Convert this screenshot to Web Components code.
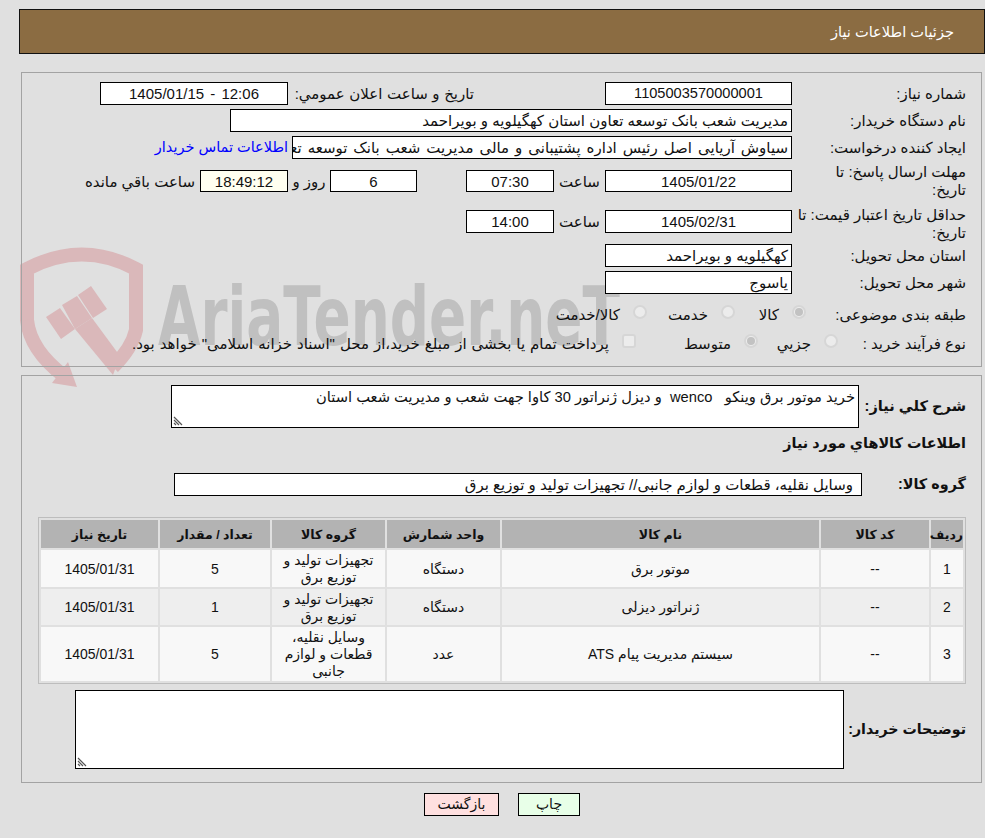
<!DOCTYPE html>
<html lang="fa" dir="rtl"><head><meta charset="utf-8"><title>جزئیات اطلاعات نیاز</title>
<style>
html{background:#e0e0e0}
html,body{margin:0;padding:0}
body{width:985px;height:838px;overflow:hidden;position:relative;font:15px "Liberation Sans","DejaVu Sans",sans-serif;color:#111;direction:rtl}
</style></head><body>
<water-mark></water-mark>
<page-header>جزئیات اطلاعات نیاز</page-header>

<info-panel style="--top:18px;--h:295px;--pt:9px">
  <form-row style="--h:23px">
    <field-label style="--w:174px">شماره نیاز:</field-label>
    <field-box style="--w:187px;--fs:14.6px">1105003570000001</field-box>
    <field-label style="--w:317px;--pr:131px;--lws:.4px">تاریخ و ساعت اعلان عمومي:</field-label>
    <field-box style="--w:188px;--ws:2px">12:06 - 1405/01/15</field-box>
  </form-row>
  <form-row style="--h:23px;--mt:4px">
    <field-label style="--w:174px">نام دستگاه خریدار:</field-label>
    <field-box style="--w:562px;--al:right">مدیریت شعب بانک توسعه تعاون استان کهگیلویه و بویراحمد</field-box>
  </form-row>
  <form-row style="--h:23px;--mt:4px">
    <field-label style="--w:174px">ایجاد کننده درخواست:</field-label>
    <field-box style="--w:500px;--al:right;--ws:1.8px">سیاوش آریایی اصل رئیس اداره پشتیبانی و مالی مدیریت شعب بانک توسعه تعاون</field-box>
    <field-label style="--w:140px;--pr:4px;--c:#00f;--lfs:14.5px">اطلاعات تماس خریدار</field-label>
  </form-row>
  <form-row style="--h:22px;--mt:11px">
    <field-label style="--w:174px;--lh:18px">مهلت ارسال پاسخ: تا<br>تاریخ:</field-label>
    <field-box style="--w:187px">1405/01/22</field-box>
    <field-label style="--w:51px;--ta:center">ساعت</field-label>
    <field-box style="--w:88px">07:30</field-box>
    <spacer-gap style="--w:49px"></spacer-gap>
    <field-box style="--w:87px">6</field-box>
    <field-label style="--w:42px;--ta:center">روز و</field-label>
    <field-box style="--w:88px;--bg:#fffff0">18:49:12</field-box>
    <field-label style="--w:120px;--pr:5px">ساعت باقي مانده</field-label>
  </form-row>
  <form-row style="--h:23px;--mt:18px">
    <field-label style="--w:174px;--lh:18px;--lift:5px">حداقل تاریخ اعتبار قیمت: تا<br>تاریخ:</field-label>
    <field-box style="--w:187px">1405/02/31</field-box>
    <field-label style="--w:51px;--ta:center">ساعت</field-label>
    <field-box style="--w:88px">14:00</field-box>
  </form-row>
  <form-row style="--h:23px;--mt:11px">
    <field-label style="--w:174px">استان محل تحویل:</field-label>
    <field-box style="--w:187px;--al:right">کهگیلویه و بویراحمد</field-box>
  </form-row>
  <form-row style="--h:23px;--mt:4px">
    <field-label style="--w:174px">شهر محل تحویل:</field-label>
    <field-box style="--w:187px;--al:right">یاسوج</field-box>
  </form-row>
  <form-row style="--h:28px;--mt:6px">
    <field-label style="--w:160px">طبقه بندی موضوعی:</field-label>
    <choice-item style="--w:71px" checked>کالا</choice-item>
    <choice-item style="--w:88px">خدمت</choice-item>
    <choice-item style="--w:90px">کالا/خدمت</choice-item>
  </form-row>
  <form-row style="--h:28px;--mt:1px">
    <field-label style="--w:128px">نوع فرآیند خرید :</field-label>
    <choice-item style="--w:80px">جزيي</choice-item>
    <choice-item style="--w:122px" checked>متوسط</choice-item>
    <choice-item style="--w:500px;--iws:.8px" square>پرداخت تمام یا بخشی از مبلغ خرید،از محل "اسناد خزانه اسلامی" خواهد بود.</choice-item>
  </form-row>
</info-panel>

<info-panel style="--top:8px;--h:408px;--pt:9px">
  <form-row style="--h:43px">
    <field-label style="--w:107px;--fw:bold;--lfs:14.6px">شرح کلي نياز:</field-label>
    <note-box style="--w:688px;--h:43px;--fs:14.7px">خرید موتور برق وینکو   wenco  و دیزل ژنراتور 30 کاوا جهت شعب و مدیریت شعب استان</note-box>
  </form-row>
  <form-row style="--h:24px;--mt:3px">
    <field-label style="--w:400px;--fw:bold;--lfs:14.4px">اطلاعات کالاهاي مورد نياز</field-label>
  </form-row>
  <form-row style="--h:23px;--mt:18px">
    <field-label style="--w:104px;--fw:bold;--lfs:14.4px">گروه کالا:</field-label>
    <field-box style="--w:688px;--al:right;--pad:8px">وسایل نقلیه، قطعات و لوازم جانبی// تجهیزات تولید و توزیع برق</field-box>
  </form-row>
  <goods-table></goods-table>
  <form-row style="--h:79px;--mt:6px">
    <field-label style="--w:122px;--fw:bold;--lfs:14.2px">توضیحات خریدار:</field-label>
    <note-box style="--w:769px;--h:79px"></note-box>
  </form-row>
</info-panel>

<button-bar>
  <action-btn style="--w:62px;--bg:#e8ffe8">چاپ</action-btn>
  <action-btn style="--w:75px;--bg:#ffe0e0">بازگشت</action-btn>
</button-bar>

<script>
function define(name, html){
  customElements.define(name, class extends HTMLElement{
    constructor(){super();this.attachShadow({mode:'open'}).innerHTML=html;}
  });
}
define('page-header',`<style>:host{display:block;box-sizing:border-box;margin:9px 0 0 0;width:966px;height:45px;background:#8b6c42;border:1px solid #111;color:#fff;padding:0 30px;line-height:44px;font-size:14.6px}</style><slot></slot>`);
define('info-panel',`<style>:host{display:block;box-sizing:border-box;width:961px;height:var(--h);margin-top:var(--top);margin-right:3px;padding-top:var(--pt);padding-right:15px;border:1px solid #a3a3a3}
.c{display:flex;flex-direction:column}</style><div class="c"><slot></slot></div>`);
define('form-row',`<style>:host{display:flex;align-items:center;height:var(--h);margin-top:var(--mt,0)}</style><slot></slot>`);
define('field-label',`<style>:host{display:block;box-sizing:border-box;flex:none;width:var(--w);padding-right:var(--pr,0);padding-top:var(--lift,0);text-align:var(--ta,right);color:var(--c,#111);font-weight:var(--fw,normal);font-size:var(--lfs,inherit);line-height:var(--lh,17px);white-space:nowrap;word-spacing:var(--lws,0)}</style><slot></slot>`);
define('field-box',`<style>:host{display:block;box-sizing:border-box;flex:none;width:var(--w);height:100%;background:var(--bg,#fff);border:1px solid #000;padding:0 var(--pad,3px);text-align:var(--al,center);white-space:nowrap;overflow:hidden;line-height:21px;font-size:var(--fs,inherit);word-spacing:var(--ws,0)}</style><slot></slot>`);
define('spacer-gap',`<style>:host{display:block;flex:none;width:var(--w)}</style>`);
define('note-box',`<style>:host{display:block;box-sizing:border-box;position:relative;flex:none;width:var(--w);height:var(--h);background:#fff;border:1px solid #000;padding:3px;white-space:pre-wrap;line-height:17px;font-size:var(--fs,inherit)}
svg{position:absolute;left:1px;bottom:1px}</style><slot></slot><svg width="10" height="10" viewBox="0 0 10 10"><path d="M1 1l8 8M1 4l5 5M1 7l2 2" stroke="#555" stroke-width="1.2" fill="none"/></svg>`);
customElements.define('choice-item',class extends HTMLElement{
  constructor(){super();
    const sq=this.hasAttribute('square'),ck=this.hasAttribute('checked');
    this.attachShadow({mode:'open'}).innerHTML=`<style>:host{display:flex;align-items:center;flex:none;width:var(--w);white-space:nowrap;gap:13px;word-spacing:var(--iws,0)}
    .m{flex:none;box-sizing:border-box;width:14px;height:14px;margin-top:-5px;border:2px solid #d6d6d6;background:#ececec;border-radius:${sq?'3px':'50%'};position:relative}
    .d{position:absolute;inset:1px;border-radius:50%;background:#c2c2c2}
    span{display:block;margin-top:1px}</style><div class="m">${ck?'<div class="d"></div>':''}</div><span><slot></slot></span>`;
  }
});
customElements.define('goods-table',class extends HTMLElement{
  constructor(){super();
    const head=['ردیف','کد کالا','نام کالا','واحد شمارش','گروه کالا','تعداد / مقدار','تاریخ نیاز'];
    const rows=[['1','--','موتور برق','دستگاه','تجهیزات تولید و توزیع برق','5','1405/01/31'],
      ['2','--','ژنراتور دیزلی','دستگاه','تجهیزات تولید و توزیع برق','1','1405/01/31'],
      ['3','--','سیستم مدیریت پیام ATS','عدد','وسایل نقلیه، قطعات و لوازم جانبی','5','1405/01/31']];
    const w=[32,108,317,113,113,110,117],h=[37,36,54];
    this.attachShadow({mode:'open'}).innerHTML=`<style>:host{display:block;margin:21px 0 0 0;width:928px}
    table{box-sizing:border-box;width:928px;height:167px;table-layout:fixed;border-collapse:separate;border-spacing:2px;border:1px solid #bdbdbd}
    th{background:#b3b3b3;height:28px;padding:0;font-size:12.5px;font-weight:bold}
    td{padding:1px 8px 0;text-align:center;line-height:17px;font-size:14px;background:#f8f8f8}
    tr:nth-child(3) td{background:#eee}</style>
    <table><colgroup>${w.map(x=>`<col style="width:${x}px">`).join('')}</colgroup>
    <tr>${head.map(x=>`<th>${x}</th>`).join('')}</tr>
    ${rows.map((r,i)=>`<tr style="height:${h[i]}px">${r.map(x=>`<td>${x}</td>`).join('')}</tr>`).join('')}</table>`;
  }
});
define('button-bar',`<style>:host{display:flex;gap:19px;margin-top:10px;margin-right:405px;width:156px}</style><slot></slot>`);
define('action-btn',`<style>:host{display:block;box-sizing:border-box;flex:none;width:var(--w);height:23px;background:var(--bg);border:1px solid #000;text-align:center;line-height:21px;font-size:14px}</style><slot></slot>`);
define('water-mark',`<style>:host{position:absolute;left:0;top:0;z-index:-1;width:985px;height:838px;display:block}svg{display:block}</style>
<svg width="985" height="838" viewBox="0 0 985 838" direction="ltr">
 <g fill="none" stroke="#dab8ba" stroke-width="14">
  <path d="M27 321V269Q82 240 136 269V330Q132 348 113 367"/>
  <path d="M27 320Q30 350 64 376"/>
 </g>
 <g fill="#dab8ba">
  <path d="M68 362L77 387 52 383Z"/>
  <path d="M46 317L60 308 75 329 61 339Z"/>
  <path d="M62 305L77 296 92 318 75 329Z"/>
  <path d="M78 295L91 286 107 309 93 318Z"/>
  <path d="M75 329L92 318 120 356 113 375Z"/>
 </g>
 <text x="158" y="345" fill="#c0c0c0" font-family="DejaVu Sans" font-weight="bold" font-size="82" textLength="462" lengthAdjust="spacingAndGlyphs" direction="ltr" unicode-bidi="bidi-override">AriaTender.neT</text>
</svg>`);
</script>
</body></html>
